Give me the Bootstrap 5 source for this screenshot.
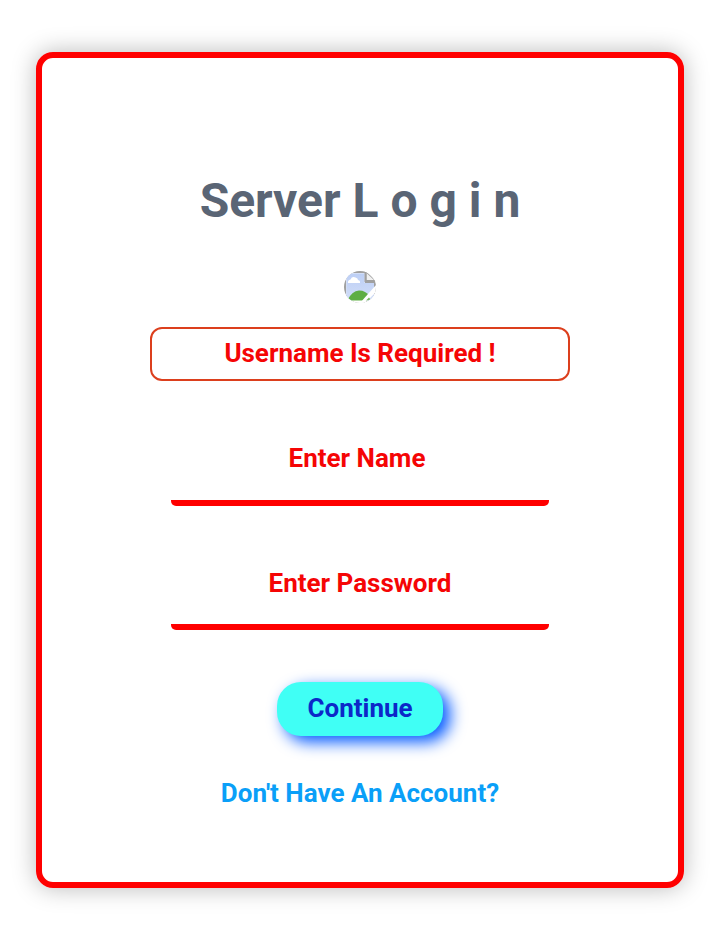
<!DOCTYPE html>
<html lang="en">
<head>
<meta charset="utf-8">
<meta name="viewport" content="width=device-width, initial-scale=1">
<title>Server Login</title>
<link href="https://cdn.jsdelivr.net/npm/bootstrap@5.3.0/dist/css/bootstrap.min.css" rel="stylesheet">
<style>
body{font-family:Roboto,sans-serif;font-weight:700;font-size:26px;background:#fff}
.page{height:939px;padding-top:52px}
.login-panel{width:648px;height:836px;border:6px solid red;border-radius:17px;box-shadow:0 0 24px rgba(0,0,0,.28);padding-top:107px}
.login-title{font-size:48px;line-height:72px;color:#5a6575;font-weight:700}
.avatar{width:32px;height:32px;margin-top:34px}
.notice{width:420px;height:54px;margin-top:24px;border:2px solid #dc3f1d;border-radius:12px;color:#f50505;line-height:48px}
.field{width:378px;height:94px;border:0;border-bottom:6px solid red;border-radius:5px;background:transparent;text-align:center;color:#f50505;font-weight:700;padding:0;outline:0}
.field::placeholder{color:#f50505;opacity:1}
.field-name{margin-top:31px;padding:4px 6px 0 0}
.field-pass{margin-top:30px;padding-top:5px}
.btn-go{width:166px;height:54px;margin-top:52px;border-radius:24px;background:#40fff5;color:#0c28c8;font-size:26px;line-height:39px;font-weight:700;box-shadow:7px 6px 16px #0058ff}
.btn-go span{padding-bottom:2px}
.signup{margin-top:38px;line-height:39px;color:#0a9ff8}
</style>
</head>
<body>
<div class="page">
<main class="login-panel mx-auto d-flex flex-column align-items-center text-center">
<h1 class="login-title mb-0">Server L o g i n</h1>
<svg class="avatar flex-shrink-0" viewBox="0 0 32 32" role="img" aria-label="Avatar">
<defs>
<clipPath id="round"><circle cx="16" cy="16" r="16"/></clipPath>
<linearGradient id="sky" x1="0" y1="0" x2="0" y2="1"><stop offset="0" stop-color="#bdcff5"/><stop offset="1" stop-color="#d2def8"/></linearGradient>
</defs>
<g clip-path="url(#round)">
<path fill="#a0a0a0" d="M0 0H22L32 10V32H0z"/>
<path fill="#d3def5" d="M2 2H21V12H30V30H2z"/>
<path fill="url(#sky)" d="M3 3H20V12H30V30H3z"/>
<path fill="#f0f0f0" d="M22.500 2V9H30z"/>
<path fill="none" stroke="#a0a0a0" stroke-width="2" d="M21.500 0V10H32"/>
<path fill="#fff" d="M4 12q-.500-3 2.500-3.500Q8 5 11.500 6.500 14 7 14 9q2.500.500 2 3z"/>
<path fill="#5eae43" d="M3 30Q8 19.500 15 19.500T25 25L21 30z"/>
<path fill="#fff" d="M1 29.500H20V32H1z"/>
<path fill="#fff" d="M16 32L32 14V21L21 32z"/>
<path fill="#78b860" d="M22 29.500L25 26.500 27 29z"/>
</g>
</svg>
<div class="notice flex-shrink-0">Username Is Required !</div>
<input class="field field-name flex-shrink-0" placeholder="Enter Name" aria-label="Name">
<input class="field field-pass flex-shrink-0" type="password" placeholder="Enter Password" aria-label="Password">
<button class="btn btn-go border-0 p-0 flex-shrink-0 d-flex justify-content-center align-items-center" type="button"><span>Continue</span></button>
<a class="signup text-decoration-none" href="#">Don't Have An Account?</a>
</main>
</div>
<script src="https://cdn.jsdelivr.net/npm/bootstrap@5.3.0/dist/js/bootstrap.bundle.min.js"></script>
</body>
</html>
